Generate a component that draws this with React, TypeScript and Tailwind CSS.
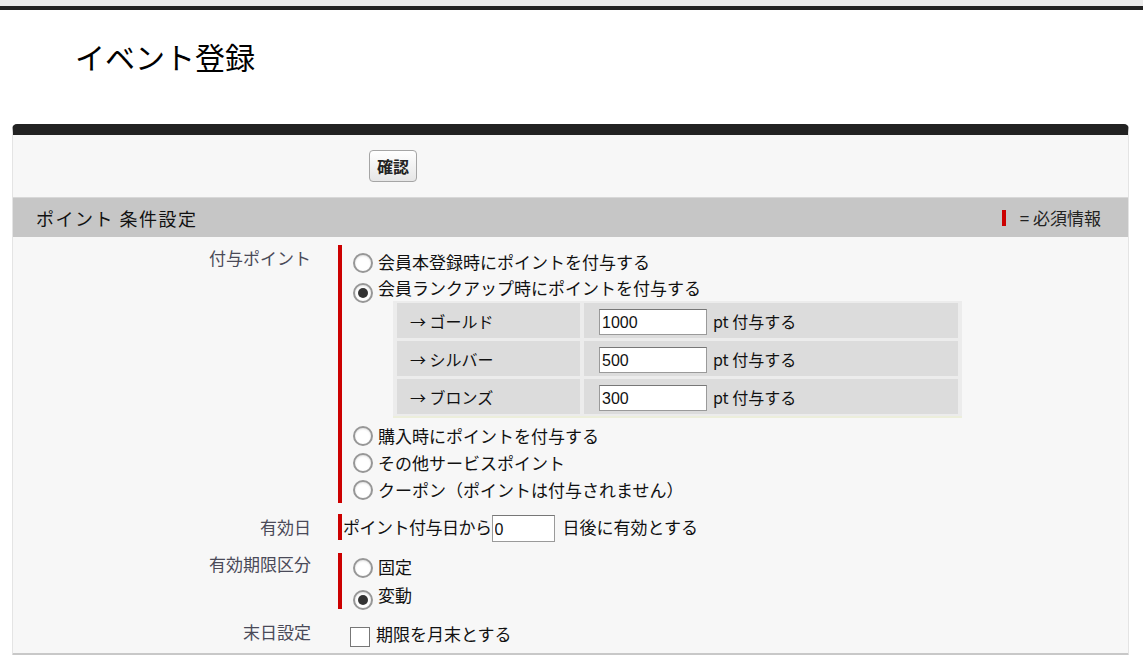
import React from "react";

const Radio = ({ checked }: { checked?: boolean }) => (
  <span className="inline-flex h-[20px] w-[20px] shrink-0 items-center justify-center rounded-full border-2 border-[#979797] bg-white shadow-[inset_0_1px_2px_rgba(0,0,0,0.12)]">
    {checked && <span className="h-[10px] w-[10px] rounded-full bg-[#333]" />}
  </span>
);

const Option = ({ label, checked, h = "h-[27px]" }: { label: string; checked?: boolean; h?: string }) => (
  <div className={`flex ${h} items-center`}>
    <span className="mt-[6px]">
      <Radio checked={checked} />
    </span>
    <span className="ml-[5px] whitespace-nowrap text-[17px] leading-[20px] text-[#111]">{label}</span>
  </div>
);

const Label = ({ children, pt = "pt-[3px]" }: { children: React.ReactNode; pt?: string }) => (
  <div className={`w-[298px] shrink-0 text-right text-[17px] leading-[20px] text-[#4a4a58] ${pt}`}>{children}</div>
);

const tiers = [
  { name: "→ ゴールド", value: "1000" },
  { name: "→ シルバー", value: "500" },
  { name: "→ ブロンズ", value: "300" },
];

export default function App() {
  return (
    <div className="min-h-[655px] w-full bg-white font-['Noto_Sans_CJK_JP',sans-serif]">
      <div className="h-[6px] bg-[#ebebeb]" />
      <div className="h-[4px] bg-[#222]" />
      <div className="h-[114px] pl-[75px] pt-[28px]">
        <h1 className="text-[30px] leading-[36px] text-black">イベント登録</h1>
      </div>

      <div className="ml-[12px] w-[1117px] rounded-t-[5px] border-x border-t-[11px] border-b-[4px] border-x-[#e4e4e4] border-t-[#222] border-b-[#c8c8c8] bg-[#f7f7f7]">
        <div className="flex h-[62px] items-center pl-[356px]">
          <button className="h-[32px] w-[48px] rounded-[4px] border border-[#a5a5a5] bg-gradient-to-b from-white to-[#e6e6e6] text-[16px] font-bold leading-[20px] text-[#222]">
            確認
          </button>
        </div>

        <div className="flex h-[40px] items-center justify-between border-t border-[#d8d8d8] bg-[#c6c6c6] pl-[23px] pr-[27px]">
          <span className="text-[18px] leading-[22px] tracking-[1.5px] text-[#111]">ポイント 条件設定</span>
          <span className="flex items-center text-[17px] leading-[20px] text-[#222]">
            <span className="mr-[14px] h-[16px] w-[4px] bg-[#cc0000]" />= 必須情報
          </span>
        </div>

        <div className="flex flex-col pb-[6px] pt-[8px]">
          {/* 付与ポイント */}
          <div className="flex">
            <Label>付与ポイント</Label>
            <div className="ml-[27px] border-l-[4px] border-[#cc0000] pl-[11px] pt-[4px]">
              <Option label="会員本登録時にポイントを付与する" h="h-[26px]" />
              <Option label="会員ランクアップ時にポイントを付与する" checked h="h-[26px]" />
              <div className="ml-[40px] w-[569px] border-b-[2px] border-[#eceedb] bg-[#ececec] px-[4px] py-[2px]">
                <div className="grid grid-cols-[183px_374px] gap-x-[4px] gap-y-[3px]">
                  {tiers.map((t) => (
                    <React.Fragment key={t.name}>
                      <div className="flex h-[35px] items-center bg-[#dcdcdc] pl-[13px] text-[16px] leading-[20px] text-[#111]">
                        {t.name}
                      </div>
                      <div className="flex h-[35px] items-center bg-[#dcdcdc] pl-[15px]">
                        <input
                          readOnly
                          value={t.value}
                          className="mt-[2px] h-[26px] w-[108px] border border-[#9a9a9a] border-t-[#777] bg-white px-[2px] pt-[3px] font-['Liberation_Sans',sans-serif] text-[16px] text-[#111] outline-none"
                        />
                        <span className="ml-[6px] text-[16px] leading-[20px] text-[#111]">pt 付与する</span>
                      </div>
                    </React.Fragment>
                  ))}
                </div>
              </div>
              <div className="mt-[4px]">
                <Option label="購入時にポイントを付与する" />
                <Option label="その他サービスポイント" />
                <Option label="クーポン（ポイントは付与されません）" />
              </div>
            </div>
          </div>

          {/* 有効日 */}
          <div className="mt-[11px] flex">
            <Label>有効日</Label>
            <div className="ml-[27px] flex h-[26px] items-center border-l-[4px] border-[#cc0000] pl-[1px]">
              <span className="whitespace-nowrap text-[17px] leading-[20px] tracking-[-0.5px] text-[#111]">ポイント付与日から</span>
              <input
                readOnly
                value="0"
                className="mt-[2px] h-[27px] w-[63px] border border-[#9a9a9a] border-t-[#777] bg-white px-[2px] pt-[3px] font-['Liberation_Sans',sans-serif] text-[16px] text-[#111] outline-none"
              />
              <span className="ml-[8px] whitespace-nowrap text-[17px] leading-[20px] text-[#111]">日後に有効とする</span>
            </div>
          </div>

          {/* 有効期限区分 */}
          <div className="mt-[13px] flex">
            <Label pt="pt-[1px]">有効期限区分</Label>
            <div className="ml-[27px] border-l-[4px] border-[#cc0000] pl-[11px]">
              <Option label="固定" h="h-[28px]" />
              <Option label="変動" checked h="h-[28px]" />
            </div>
          </div>

          {/* 末日設定 */}
          <div className="mt-[11px] flex h-[27px]">
            <Label pt="pt-[2px]">末日設定</Label>
            <div className="ml-[39px] flex items-center">
              <span className="mt-[6px] h-[20px] w-[20px] border border-[#777] bg-white" />
              <span className="ml-[6px] text-[17px] leading-[20px] text-[#111]">期限を月末とする</span>
            </div>
          </div>
        </div>
      </div>
    </div>
  );
}
